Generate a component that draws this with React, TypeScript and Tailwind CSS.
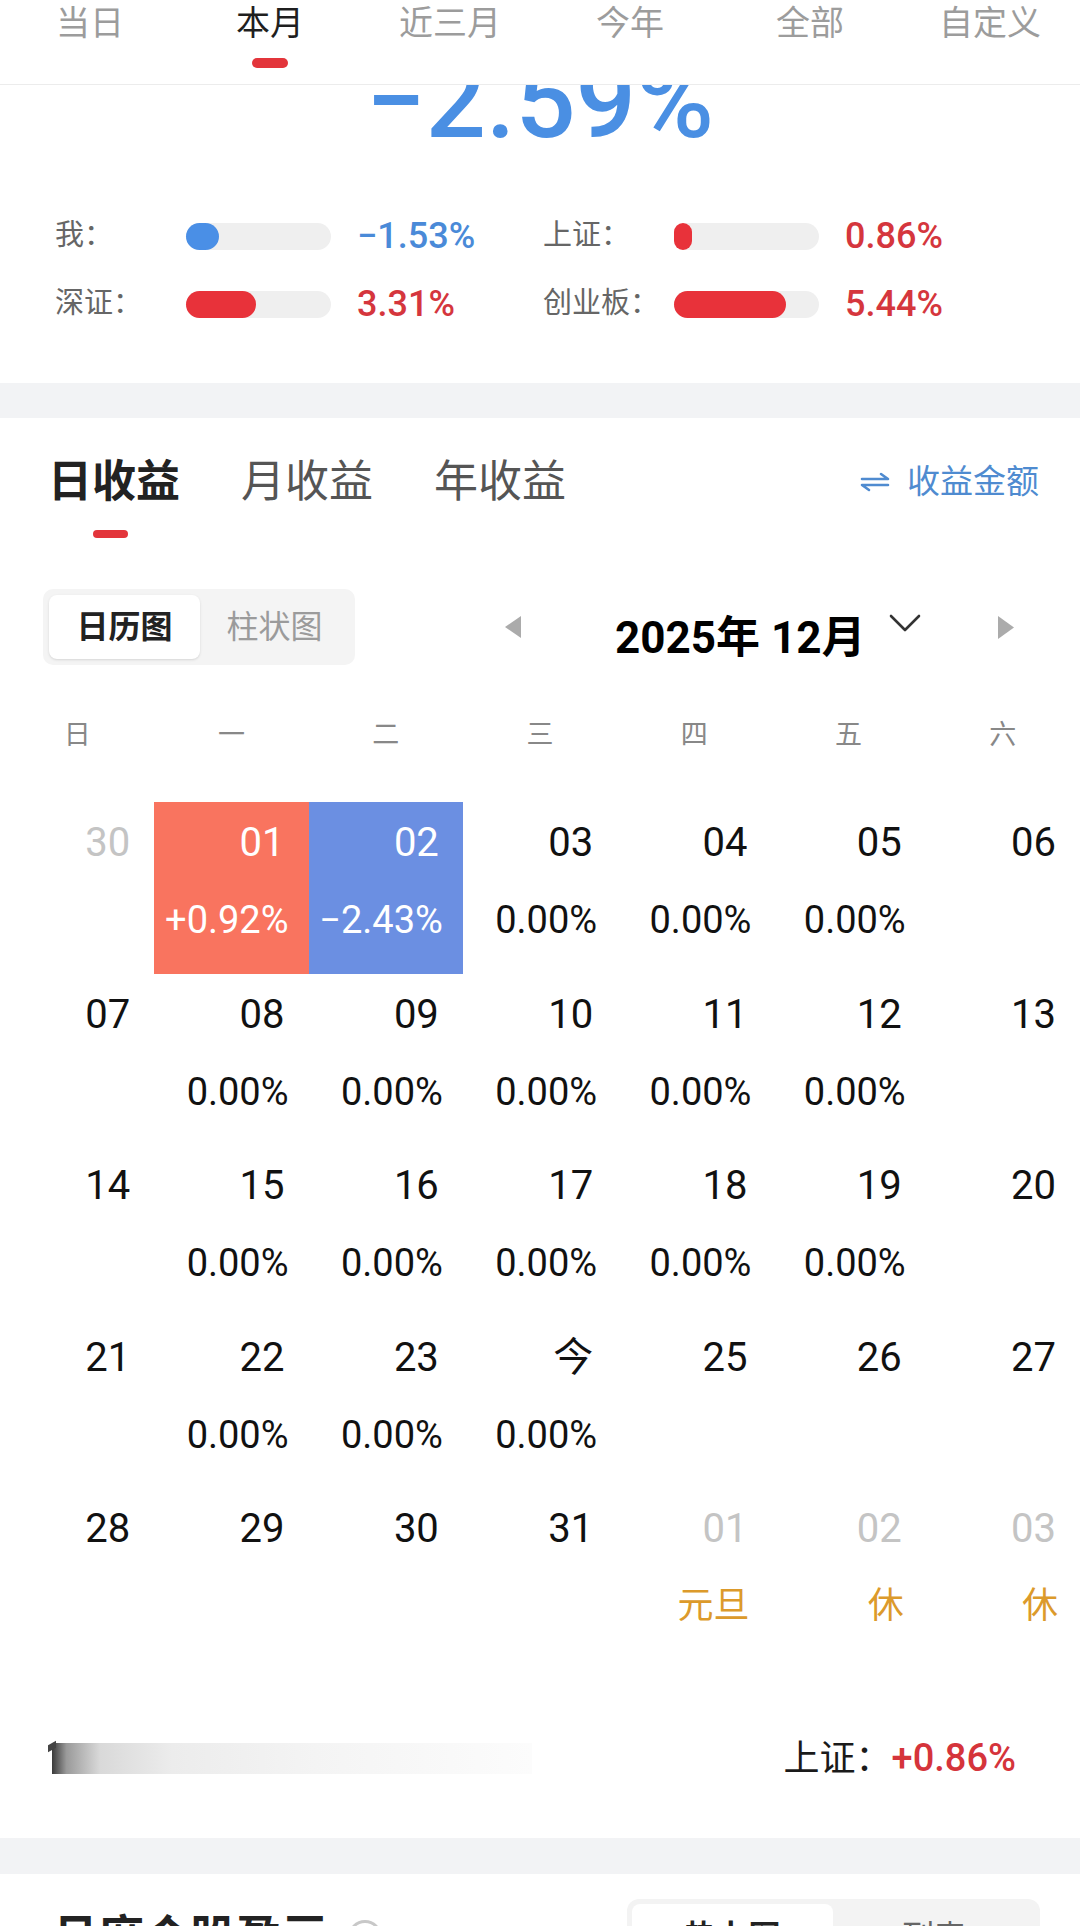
import React from 'react';

type Cell = {
  d: string;
  p?: string;
  muted?: boolean;
  tone?: 'up' | 'down';
  holiday?: string;
};

const topTabs = ['当日', '本月', '近三月', '今年', '全部', '自定义'];

const stats = [
  { label: '我：', fill: 33, value: '−1.53%', color: 'blue' },
  { label: '上证：', fill: 18, value: '0.86%', color: 'red' },
  { label: '深证：', fill: 70, value: '3.31%', color: 'red' },
  { label: '创业板：', fill: 112, value: '5.44%', color: 'red' },
];

const weekdays = ['日', '一', '二', '三', '四', '五', '六'];

const z = '0.00%';
const weeks: Cell[][] = [
  [
    { d: '30', muted: true },
    { d: '01', p: '+0.92%', tone: 'up' },
    { d: '02', p: '−2.43%', tone: 'down' },
    { d: '03', p: z },
    { d: '04', p: z },
    { d: '05', p: z },
    { d: '06' },
  ],
  [{ d: '07' }, { d: '08', p: z }, { d: '09', p: z }, { d: '10', p: z }, { d: '11', p: z }, { d: '12', p: z }, { d: '13' }],
  [{ d: '14' }, { d: '15', p: z }, { d: '16', p: z }, { d: '17', p: z }, { d: '18', p: z }, { d: '19', p: z }, { d: '20' }],
  [{ d: '21' }, { d: '22', p: z }, { d: '23', p: z }, { d: '今', p: z }, { d: '25' }, { d: '26' }, { d: '27' }],
  [
    { d: '28' },
    { d: '29' },
    { d: '30' },
    { d: '31' },
    { d: '01', muted: true, holiday: '元旦' },
    { d: '02', muted: true, holiday: '休' },
    { d: '03', muted: true, holiday: '休' },
  ],
];

const DayCell = ({ cell }: { cell: Cell }) => {
  const bg = cell.tone === 'up' ? 'bg-[#f9745f]' : cell.tone === 'down' ? 'bg-[#6b8fe2]' : 'bg-white';
  const dateColor = cell.tone ? 'text-white' : cell.muted ? 'text-[#c4c4c4]' : 'text-[#111]';
  return (
    <div className={`h-[171.5px] flex flex-col items-end pt-[21px] ${bg}`}>
      <div className={`h-[40px] leading-[40px] text-[40px] pr-[24px] ${dateColor}`}>{cell.d}</div>
      {cell.p && (
        <div className={`mt-[38px] h-[38px] leading-[38px] text-[38px] pr-[20px] ${cell.tone ? 'text-white' : 'text-[#111]'}`}>
          {cell.p}
        </div>
      )}
      {cell.holiday && (
        <div className="mt-[38px] h-[38px] leading-[38px] text-[36px] pr-[22px] text-[#dc9a2b]">{cell.holiday}</div>
      )}
    </div>
  );
};

export default function App() {
  return (
    <div className="min-h-screen bg-white font-['Roboto','Noto_Sans_CJK_SC',sans-serif]">
      {/* top period tabs */}
      <header className="fixed top-0 left-0 right-0 z-10 h-[85px] bg-white border-b border-[#ececec]">
        <div className="grid grid-cols-6 h-[46px]">
          {topTabs.map((t, i) => (
            <div
              key={t}
              className={`flex items-center justify-center text-[34px] leading-none ${i === 1 ? 'text-[#1f1f1f]' : 'text-[#9c9c9c]'}`}
            >
              {t}
            </div>
          ))}
        </div>
        <div className="grid grid-cols-6">
          <div className="col-start-2 flex justify-center">
            <span className="mt-[12px] h-[10px] w-[36px] rounded-full bg-[#e3353b]" />
          </div>
        </div>
      </header>

      <main className="pt-[48px]">
        {/* summary */}
        <section className="bg-white">
          <div className="text-center text-[106px] leading-none font-medium text-[#4a8fe3]">−2.59%</div>
          <div className="mt-[48px] pl-[55px] pb-[45px] grid grid-cols-[488px_1fr]">
            {stats.map((s) => (
              <div key={s.label} className="flex items-center h-[68px]">
                <div className="w-[131px] text-[29px] text-[#666]">{s.label}</div>
                <div className="w-[145px] h-[27px] rounded-full bg-[#efefef]">
                  <div
                    className={`h-[27px] rounded-full ${s.color === 'blue' ? 'bg-[#4a8fe6]' : 'bg-[#e8323a]'}`}
                    style={{ width: s.fill }}
                  />
                </div>
                <div
                  className={`ml-[26px] text-[36px] font-medium ${s.color === 'blue' ? 'text-[#4a8ad8]' : 'text-[#d5363d]'}`}
                >
                  {s.value}
                </div>
              </div>
            ))}
          </div>
        </section>

        <div className="h-[35px] bg-[#f2f3f5]" />

        {/* daily returns */}
        <section className="bg-white pt-[24px]">
          <div className="flex items-center justify-between pl-[48px] pr-[41px] h-[80px]">
            <div className="flex gap-[61px] text-[44px] leading-none">
              <span className="font-bold text-[#222]">日收益</span>
              <span className="text-[#555]">月收益</span>
              <span className="text-[#555]">年收益</span>
            </div>
            <div className="flex items-center text-[33px] text-[#4f8bd0]">
              <svg width="30" height="20" viewBox="0 0 30 20" fill="none" stroke="#4f8bd0" strokeWidth="2.6" strokeLinecap="round" strokeLinejoin="round">
                <path d="M2 7H28L21 2" />
                <path d="M28 13H2L9 18" />
              </svg>
              <span className="ml-[17px]">收益金额</span>
            </div>
          </div>
          <div className="pl-[93px] mt-[8px]">
            <div className="h-[8px] w-[35px] rounded-full bg-[#e3353b]" />
          </div>

          {/* view switch + month nav */}
          <div className="mt-[51px] flex items-center h-[76px] pl-[43px]">
            <div className="w-[312px] h-[76px] rounded-[10px] bg-[#f4f4f4] p-[6px] flex">
              <div className="w-[151px] rounded-[8px] bg-white shadow-sm flex items-center justify-center text-[32px] font-bold text-[#222]">
                日历图
              </div>
              <div className="flex-1 flex items-center justify-center text-[32px] text-[#9b9b9b]">柱状图</div>
            </div>
            <svg className="ml-[148px]" width="20" height="24" viewBox="0 0 20 24">
              <path d="M18 1V23L2 12Z" fill="#ababab" />
            </svg>
            <div className="ml-[92px] mt-[22px] text-[44px] font-bold leading-none text-black whitespace-nowrap">
              2025年 12月
            </div>
            <svg className="ml-[23px] mb-[8px]" width="34" height="20" viewBox="0 0 34 20" fill="none" stroke="#333" strokeWidth="2.6" strokeLinecap="round" strokeLinejoin="round">
              <path d="M3 3L17 17L31 3" />
            </svg>
            <svg className="ml-[75px]" width="18" height="25" viewBox="0 0 18 25">
              <path d="M1 1V24L17 12.5Z" fill="#ababab" />
            </svg>
          </div>

          {/* weekday header */}
          <div className="mt-[35px] grid grid-cols-7 h-[70px] items-center text-center text-[27px] text-[#888]">
            {weekdays.map((w) => (
              <div key={w}>{w}</div>
            ))}
          </div>

          {/* calendar */}
          <div className="mt-[32px] grid grid-cols-7">
            {weeks.flat().map((c, i) => (
              <DayCell key={i} cell={c} />
            ))}
          </div>

          {/* footer row */}
          <div className="mt-[68px] h-[62px] flex items-center justify-between pl-[52px] pr-[64px] pb-0">
            <div className="relative w-[480px] h-[31px] bg-[linear-gradient(to_right,#3a3a3a_0%,#9a9a9a_3%,#d9d9d9_10%,#ececec_25%,#f4f4f4_55%,#fcfcfc_100%)]">
              <span className="absolute -left-[4px] top-0 h-[7px] w-[8px] bg-[#444] -skew-y-[30deg]" />
            </div>
            <div className="flex items-center">
              <span className="text-[36px] text-[#1a1a1a]">上证：</span>
              <span className="text-[38px] font-medium text-[#d5343b]">+0.86%</span>
            </div>
          </div>
          <div className="h-[48px]" />
        </section>

        <div className="h-[36px] bg-[#f2f3f5]" />

        {/* stock monthly p&l */}
        <section className="bg-white pt-[25px] h-[300px]">
          <div className="flex items-center justify-between pl-[52px] pr-[40px]">
            <div className="flex items-center">
              <span className="text-[46px] font-bold leading-none text-[#222]">月度个股盈亏</span>
              <span className="ml-[20px] w-[34px] h-[34px] rounded-full border-[3px] border-[#c8c8c8] flex items-center justify-center text-[22px] font-bold text-[#c8c8c8]">
                ?
              </span>
            </div>
            <div className="w-[413px] h-[76px] rounded-[12px] bg-[#f3f3f3] p-[5px] flex">
              <div className="w-[201px] rounded-[8px] bg-white flex items-center justify-center text-[32px] font-bold text-[#222]">
                热力图
              </div>
              <div className="flex-1 flex items-center justify-center text-[32px] text-[#666]">列表</div>
            </div>
          </div>
        </section>
      </main>
    </div>
  );
}
